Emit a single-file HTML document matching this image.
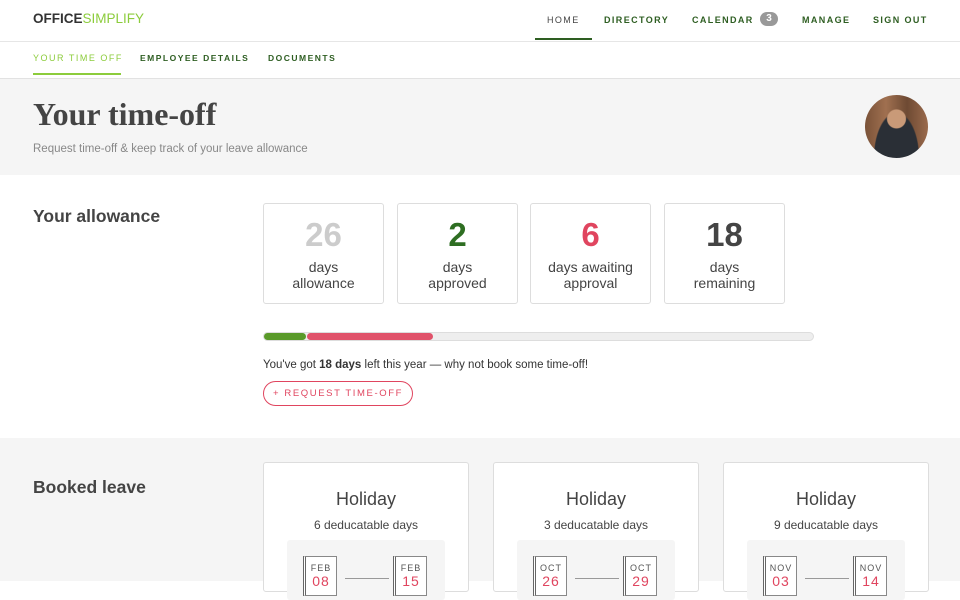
<!DOCTYPE html>
<html><head><style>
*{margin:0;padding:0;box-sizing:border-box}
body{width:960px;height:581px;overflow:hidden;font-family:"Liberation Sans",sans-serif;background:#fff;position:relative;color:#444}
.a{position:absolute}
.nav{font-size:9px;letter-spacing:1.4px;color:#2e5e22;font-weight:bold;top:15px}
.sub{font-size:8.5px;letter-spacing:1.5px;color:#2e5e22;font-weight:bold;top:53px}
.box{position:absolute;top:203px;width:121px;height:101px;border:1px solid #ddd;border-radius:3px;background:#fff;text-align:center}
.box .n{font-size:33px;font-weight:bold;margin-top:12px;line-height:38px}
.box .t{font-size:14px;line-height:16px;color:#444;margin-top:5px}
.card{position:absolute;top:462px;width:206px;height:130px;border:1px solid #ddd;border-radius:3px;background:#fff;text-align:center}
.card h3{font-weight:normal;font-size:18px;margin-top:26px;color:#444}
.card p{font-size:12px;margin-top:8px;color:#444}
.inner{position:absolute;left:23px;top:77px;width:158px;height:60px;background:#f5f5f5;border-radius:3px}
.cal{position:absolute;top:16px;width:34px;height:40px;border:1px solid #888;border-left:3px double #666;background:#fff;text-align:center;font-size:9px;letter-spacing:1px;color:#555;padding-top:6px}
.cal b{display:block;color:#e0455f;font-size:14px;font-weight:normal}
.arr{position:absolute;top:38px;left:58px;width:44px;border-top:1px solid #999}
</style></head><body>
<div class="a" style="left:33px;top:11px;font-size:13.5px;font-weight:bold;color:#333">OFFICE<span style="color:#8ccc3c;font-weight:normal">SIMPLIFY</span></div>
<div class="a nav" style="left:547px;color:#444;font-weight:normal">HOME</div>
<div class="a" style="left:535px;top:38px;width:57px;height:2px;background:#2e5e22"></div>
<div class="a nav" style="left:604px">DIRECTORY</div>
<div class="a nav" style="left:692px">CALENDAR</div>
<div class="a" style="left:760px;top:12px;width:18px;height:14px;border-radius:7px;background:#999;color:#fff;font-size:10px;font-weight:bold;text-align:center;line-height:14px">3</div>
<div class="a nav" style="left:802px">MANAGE</div>
<div class="a nav" style="left:873px">SIGN OUT</div>
<div class="a" style="left:0;top:41px;width:960px;height:1px;background:#e6e6e6"></div>
<div class="a sub" style="left:33px;color:#8ccc3c;font-weight:normal;font-size:9px">YOUR TIME OFF</div>
<div class="a" style="left:33px;top:73px;width:88px;height:2px;background:#8ccc3c"></div>
<div class="a sub" style="left:140px">EMPLOYEE DETAILS</div>
<div class="a sub" style="left:268px">DOCUMENTS</div>
<div class="a" style="left:0;top:78px;width:960px;height:97px;background:#f5f5f5;border-top:1px solid #e2e2e2"></div>
<div class="a" style="left:33px;top:96px;font-family:'Liberation Serif',serif;font-weight:bold;font-size:32px;color:#444">Your time-off</div>
<div class="a" style="left:33px;top:143px;font-size:11.5px;color:#888">Request time-off &amp; keep track of your leave allowance</div>
<div class="a" style="left:865px;top:95px;width:63px;height:63px;border-radius:50%;background:radial-gradient(circle at 50% 38%,#c99a78 0 9px,transparent 10px),radial-gradient(ellipse at 50% 100%,#2a2f36 0 22px,transparent 23px),linear-gradient(90deg,#7a5238,#a07050,#6e4a33,#9a6a4c)"></div>
<div class="a" style="left:33px;top:206px;font-size:17.5px;color:#444;font-weight:bold">Your allowance</div>
<div class="box" style="left:263px"><div class="n" style="color:#ccc">26</div><div class="t">days<br>allowance</div></div>
<div class="box" style="left:397px"><div class="n" style="color:#2e6e22">2</div><div class="t">days<br>approved</div></div>
<div class="box" style="left:530px"><div class="n" style="color:#e0455f">6</div><div class="t">days awaiting<br>approval</div></div>
<div class="box" style="left:664px"><div class="n" style="color:#444">18</div><div class="t">days<br>remaining</div></div>
<div class="a" style="left:263px;top:332px;width:551px;height:9px;border-radius:5px;background:#eee;border:1px solid #ddd"></div>
<div class="a" style="left:264px;top:333px;width:42px;height:7px;border-radius:4px;background:#5a9a2a"></div>
<div class="a" style="left:307px;top:333px;width:126px;height:7px;border-radius:4px;background:#e0526a"></div>
<div class="a" style="left:263px;top:359px;font-size:11.5px;color:#333">You've got <b>18 days</b> left this year — why not book some time-off!</div>
<div class="a" style="left:263px;top:381px;width:150px;height:25px;border:1px solid #e0455f;border-radius:13px;color:#e0455f;font-size:9.5px;letter-spacing:1.6px;text-align:center;line-height:23px">+ REQUEST TIME-OFF</div>
<div class="a" style="left:0;top:438px;width:960px;height:143px;background:#f5f5f5"></div>
<div class="a" style="left:33px;top:477px;font-size:17.5px;color:#444;font-weight:bold">Booked leave</div>
<div class="card" style="left:263px"><h3>Holiday</h3><p>6 deducatable days</p><div class="inner"><div class="cal" style="left:16px">FEB<b>08</b></div><div class="arr"></div><div class="cal" style="left:106px">FEB<b>15</b></div></div></div>
<div class="card" style="left:493px"><h3>Holiday</h3><p>3 deducatable days</p><div class="inner"><div class="cal" style="left:16px">OCT<b>26</b></div><div class="arr"></div><div class="cal" style="left:106px">OCT<b>29</b></div></div></div>
<div class="card" style="left:723px"><h3>Holiday</h3><p>9 deducatable days</p><div class="inner"><div class="cal" style="left:16px">NOV<b>03</b></div><div class="arr"></div><div class="cal" style="left:106px">NOV<b>14</b></div></div></div>
</body></html>
